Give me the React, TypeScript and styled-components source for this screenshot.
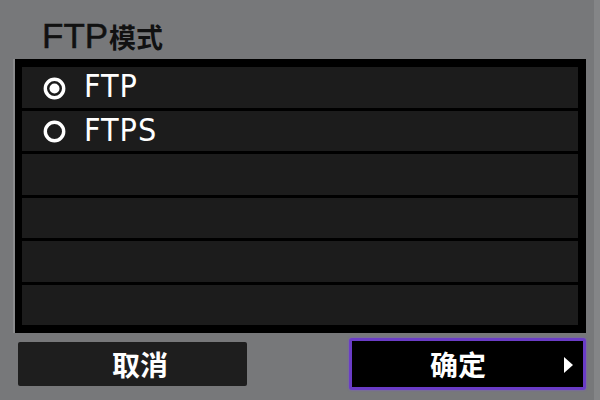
import { useState } from "react";
import styled, { createGlobalStyle } from "styled-components";

const GlobalStyle = createGlobalStyle`
    html, body {
        margin: 0;
        padding: 0;
        background: #77787a;
    }
`;

const options = ["FTP", "FTPS", "", "", "", ""];

const RadioIcon = ({ checked }: { checked: boolean }) => (
    <RadioSvg viewBox="0 0 23 23">
        <circle cx="11.5" cy="11.5" r="9.2" fill="none" stroke="#fff" strokeWidth="3.4" />
        {checked && <circle cx="11.5" cy="11.5" r="5" fill="#fff" />}
    </RadioSvg>
);

const App = () => {
    const [selected, setSelected] = useState(0);

    return (
        <Screen>
            <GlobalStyle />
            <Title>
                FTP<TitleCjk>模式</TitleCjk>
            </Title>
            <ListPanel>
                {options.map((label, i) => (
                    <Row key={i} onClick={() => label && setSelected(i)}>
                        {label && (
                            <>
                                <RadioIcon checked={selected === i} />
                                <RowLabel>{label}</RowLabel>
                            </>
                        )}
                    </Row>
                ))}
            </ListPanel>
            <Footer>
                <CancelButton>取消</CancelButton>
                <ConfirmButton>
                    确定
                    <Arrow viewBox="0 0 9 16">
                        <polygon points="0,0 9,8 0,16" fill="#fff" />
                    </Arrow>
                </ConfirmButton>
            </Footer>
        </Screen>
    );
};

const Screen = styled.div`
    width: 600px;
    height: 400px;
    box-sizing: border-box;
    padding: 0 8px 0 15px;
    border-right: 6px solid #848587;
    background: #77787a;
    display: flex;
    flex-direction: column;
    overflow: hidden;
`;

const Title = styled.div`
    height: 59px;
    box-sizing: border-box;
    padding: 18px 0 0 27px;
    line-height: 35px;
    font-family: "Liberation Sans", "Noto Sans CJK SC", sans-serif;
    font-size: 35px;
    color: #111;
    white-space: nowrap;
    -webkit-text-stroke: 0.5px #111;
`;

const TitleCjk = styled.span`
    font-family: "Noto Sans CJK SC", sans-serif;
    font-size: 27px;
    font-weight: 700;
    margin-left: 1px;
    -webkit-text-stroke: 0;
`;

const ListPanel = styled.div`
    height: 274px;
    box-sizing: border-box;
    background: #000;
    padding: 8px 8px 8px 7px;
    display: grid;
    grid-template-rows: repeat(6, 1fr);
    gap: 3px;
    box-shadow: -2px 0 0 #8a8b8d;
`;

const Row = styled.div`
    background: #1c1c1c;
    display: flex;
    align-items: center;
    padding-left: 21px;
    gap: 18px;
`;

const RadioSvg = styled.svg`
    flex: 0 0 23px;
    width: 23px;
    height: 23px;
    margin-top: 2px;
`;

const RowLabel = styled.span`
    font-family: "DejaVu Sans Condensed", "Liberation Sans Narrow", "DejaVu Sans", sans-serif;
    font-stretch: condensed;
    font-size: 32px;
    letter-spacing: 1px;
    color: #fff;
    line-height: 1;
    margin-top: -2px;
`;

const Footer = styled.div`
    margin-top: 5px;
    height: 52px;
    display: flex;
    align-items: center;
    justify-content: space-between;
`;

const buttonText = `
    font-family: "Noto Sans CJK SC", sans-serif;
    font-size: 28px;
    font-weight: 700;
    color: #fff;
    display: flex;
    align-items: center;
    justify-content: center;
    box-sizing: border-box;
`;

const CancelButton = styled.div`
    ${buttonText}
    margin-left: 3px;
    width: 229px;
    height: 44px;
    padding-left: 15px;
    background: #1e1e1e;
    border-radius: 2px;
`;

const ConfirmButton = styled.div`
    ${buttonText}
    position: relative;
    width: 237px;
    height: 52px;
    padding-right: 19px;
    background: #000;
    border: 3px solid #6a3cc6;
    border-radius: 3px;
    box-shadow: 0 0 2px #7d52e0;
`;

const Arrow = styled.svg`
    position: absolute;
    right: 10px;
    top: 50%;
    width: 9px;
    height: 16px;
    margin-top: -7px;
`;

export default App;
